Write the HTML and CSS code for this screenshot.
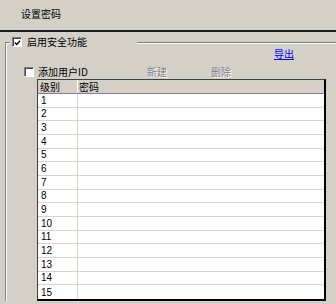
FILE: index.html
```html
<!DOCTYPE html>
<html>
<head>
<meta charset="utf-8">
<link rel="stylesheet" href="styles.css">
</head>
<body>
<div class="title">设置密码</div>
<div class="sep"></div>
<fieldset class="group">
  <legend class="legend"><span class="cb"><svg width="8" height="8" viewBox="0 0 8 8"><polyline points="1,3.5 3,5.6 7,1.4" fill="none" stroke="#000" stroke-width="1.6"/></svg></span><span>启用安全功能</span></legend>
  <div class="export-row"><a class="link">导出</a></div>
  <div class="tool-row">
    <span class="cbl"><span class="cb"></span><span>添加用户ID</span></span>
    <span class="dis new">新建</span>
    <span class="dis">删除</span>
  </div>
  <div class="table">
    <div class="thead"><div class="c1">级别</div><div class="c2">密码</div></div>
    <div class="tbody">
      <div class="tr"><div class="c1">1</div><div class="c2"></div></div>
      <div class="tr"><div class="c1">2</div><div class="c2"></div></div>
      <div class="tr"><div class="c1">3</div><div class="c2"></div></div>
      <div class="tr"><div class="c1">4</div><div class="c2"></div></div>
      <div class="tr"><div class="c1">5</div><div class="c2"></div></div>
      <div class="tr"><div class="c1">6</div><div class="c2"></div></div>
      <div class="tr"><div class="c1">7</div><div class="c2"></div></div>
      <div class="tr"><div class="c1">8</div><div class="c2"></div></div>
      <div class="tr"><div class="c1">9</div><div class="c2"></div></div>
      <div class="tr"><div class="c1">10</div><div class="c2"></div></div>
      <div class="tr"><div class="c1">11</div><div class="c2"></div></div>
      <div class="tr"><div class="c1">12</div><div class="c2"></div></div>
      <div class="tr"><div class="c1">13</div><div class="c2"></div></div>
      <div class="tr"><div class="c1">14</div><div class="c2"></div></div>
      <div class="tr"><div class="c1">15</div><div class="c2"></div></div>
    </div>
  </div>
</fieldset>
</body>
</html>
```
FILE: styles.css
```css
* { box-sizing: border-box; }
html, body { margin: 0; padding: 0; }
body {
  width: 336px;
  height: 304px;
  overflow: hidden;
  background: #D4D0C8;
  font-family: "Noto Sans CJK SC", sans-serif;
  font-size: 10px;
  color: #000;
}
.title {
  height: 30px;
  padding-left: 21px;
  line-height: 28px;
}
.sep {
  height: 2px;
  background: #1a1a1a;
}
.group {
  margin: 4px 0 0 5px;
  padding: 0;
  border: 0;
  border-top: 1px solid #808080;
  border-left: 1px solid #808080;
  box-shadow: inset 1px 1px 0 #fff;
  min-width: 0;
}
.legend {
  margin-left: 4px;
  padding: 0 0 0 2px;
  width: 127px;
  height: 12px;
  line-height: 12px;
  display: flex;
  align-items: center;
  gap: 5px;
  background: #D4D0C8;
}
.cb {
  width: 10px;
  height: 10px;
  flex: none;
  display: flex;
  align-items: center;
  justify-content: center;
  background: #fff;
  border-top: 1px solid #808080;
  border-left: 1px solid #808080;
  border-right: 1px solid #fff;
  border-bottom: 1px solid #fff;
  box-shadow: inset 1px 1px 0 #404040;
}
.cb svg { display: block; margin: 1px 0 0 1px; }
.export-row {
  display: flex;
  justify-content: flex-end;
  padding-right: 42px;
  height: 12px;
  line-height: 12px;
}
.link {
  color: #0000ff;
  text-decoration: underline;
}
.tool-row {
  display: flex;
  align-items: center;
  height: 12px;
  line-height: 12px;
  margin-top: 6px;
  padding-left: 18px;
}
.cbl {
  display: flex;
  align-items: center;
  gap: 4px;
  width: 123px;
}
.dis {
  color: #808080;
  text-shadow: 1px 1px 0 #fff;
}
.new { width: 64px; }
.table {
  margin: 1px 0 0 31px;
  width: 289px;
  height: 222px;
  display: grid;
  grid-template-rows: 14px 1fr;
  grid-template-columns: 100%;
  border-top: 1px solid #404040;
  border-left: 1px solid #404040;
  border-right: 2px solid #000;
  border-bottom: 2px solid #000;
}
.thead {
  display: grid;
  grid-template-columns: 40px 1fr;
  border-bottom: 1px solid #808080;
  line-height: 13px;
}
.thead .c1 {
  padding-left: 2px;
  border-right: 1px solid #fff;
}
.thead .c2 { padding-left: 1px; }
.tbody {
  display: grid;
  grid-template-rows: repeat(15, 1fr);
  grid-template-columns: 100%;
  background: #fff;
}
.tr {
  display: grid;
  grid-template-columns: 40px 1fr;
  border-bottom: 1px solid #D8D4CC;
  font-family: "Liberation Sans", sans-serif;
  font-size: 10px;
}
.tr:last-child { border-bottom: 0; }
.tr .c1 {
  padding-left: 3px;
  border-right: 1px solid #D8D4CC;
  display: flex;
  align-items: center;
}
```
